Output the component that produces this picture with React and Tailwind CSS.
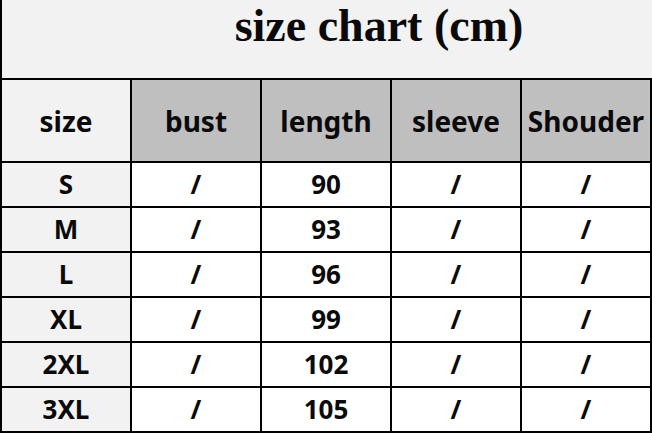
import React from "react";

const headers = ["bust", "length", "sleeve", "Shouder"];

const rows = [
  ["S", "/", "90", "/", "/"],
  ["M", "/", "93", "/", "/"],
  ["L", "/", "96", "/", "/"],
  ["XL", "/", "99", "/", "/"],
  ["2XL", "/", "102", "/", "/"],
  ["3XL", "/", "105", "/", "/"],
];

export default function App() {
  return (
    <div className="w-[652px] h-[433px] bg-white flex flex-col overflow-hidden">
      {/* Title */}
      <div className="h-[78px] shrink-0 bg-[#f2f2f2] border-l-2 border-black flex items-start">
        <h1
          className="w-full pl-[104px] text-center text-[46px] leading-[51px] font-bold text-[#0a0a0a]"
          style={{ fontFamily: '"Liberation Serif", "DejaVu Serif", serif' }}
        >
          size chart (cm)
        </h1>
      </div>

      {/* Table */}
      <div
        className="grid grid-cols-5 grid-rows-[81px_repeat(6,43px)] gap-[2px] p-[2px] bg-black text-[#0a0a0a] font-bold"
        style={{ fontFamily: '"Noto Sans", "Open Sans", sans-serif' }}
      >
        <div className="bg-[#f2f2f2] flex items-center justify-center text-[28px]">size</div>
        {headers.map((h) => (
          <div key={h} className="bg-[#bfbfbf] flex items-center justify-center text-[28px] whitespace-nowrap">
            {h}
          </div>
        ))}
        {rows.map((r) =>
          r.map((cell, i) => (
            <div
              key={r[0] + i}
              className={`flex items-center justify-center text-[26px] ${i === 0 ? "bg-[#f2f2f2]" : "bg-white"}`}
            >
              {cell}
            </div>
          ))
        )}
      </div>
    </div>
  );
}
